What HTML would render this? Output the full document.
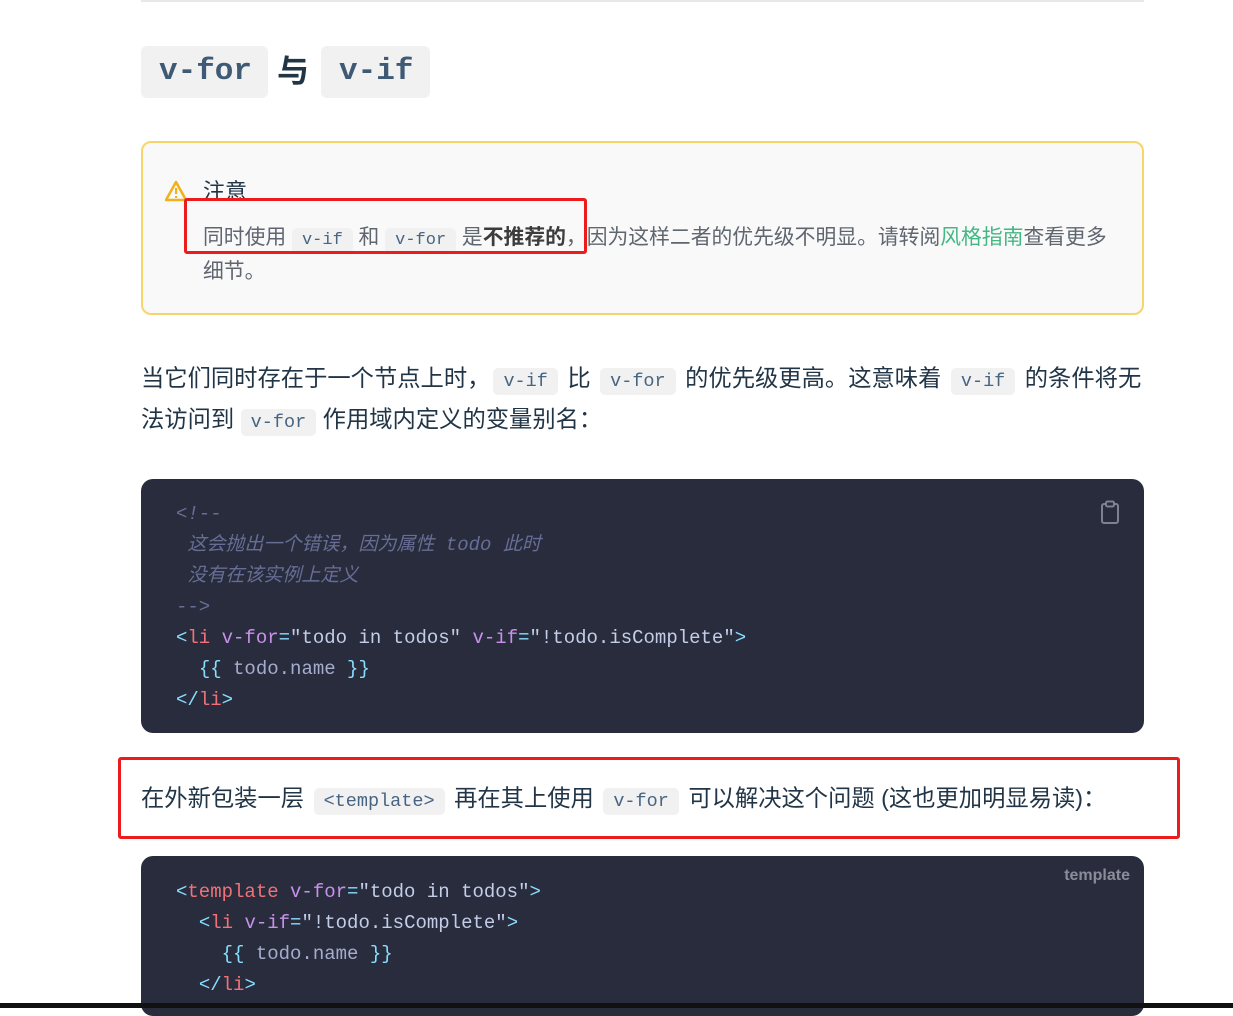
<!DOCTYPE html>
<html><head><meta charset="utf-8"><style>
*{margin:0;padding:0;box-sizing:border-box}
body{width:1233px;height:1008px;background:#fff;position:relative;overflow:hidden;font-family:"Liberation Sans","Noto Sans CJK SC",sans-serif;color:#213547}
.a{position:absolute;white-space:nowrap}
.ic{font-family:"Liberation Mono",monospace;background:#f1f1f1;color:#476582;border-radius:5px;padding:3px 10px;font-size:18.5px}
.m{margin:0 3px}
.cb{position:absolute;left:141px;width:1003px;background:#292c3d;border-radius:12px}
.code{position:absolute;left:35px;font-family:"Liberation Mono","Noto Sans CJK SC",monospace;font-size:19px;line-height:31px;color:#a6accd;white-space:pre}
.p{color:#89ddff}.t{color:#f07178}.at{color:#c792ea}.s{color:#c3cde8}.c{color:#676e95;font-style:italic}
.red{position:absolute;border:3px solid #ec1c1c;border-radius:3px}
</style></head><body>
<div class="a" style="left:141px;top:0;width:1003px;height:2px;background:#e8e8e8"></div>

<div class="a" style="left:141px;top:46px;height:52px;width:127px;background:#f1f1f1;border-radius:6px"></div>
<div class="a" style="left:321px;top:46px;height:52px;width:109px;background:#f1f1f1;border-radius:6px"></div>
<div class="a" style="left:159px;top:54px;font:bold 31px 'Liberation Mono',monospace;color:#3f5a75">v-for</div>
<div class="a" style="left:277px;top:46px;font-size:32px;font-weight:bold;color:#213547">与</div>
<div class="a" style="left:339px;top:54px;font:bold 31px 'Liberation Mono',monospace;color:#3f5a75">v-if</div>

<div class="a" style="left:141px;top:141px;width:1003px;height:174px;background:#f9f9f9;border:2px solid #f7d56b;border-radius:10px"></div>
<svg class="a" style="left:165px;top:180px" width="22" height="22" viewBox="0 0 22 22"><path d="M11 2 L21 20 H1 Z" fill="none" stroke="#f2b11b" stroke-width="2.5" stroke-linejoin="round"/><rect x="10" y="8" width="2.2" height="6" fill="#f2b11b"/><rect x="10" y="16" width="2.2" height="2" fill="#f2b11b"/></svg>
<div class="a" style="left:203px;top:174px;font-size:22px;color:#213547">注意</div>
<div class="a" style="left:203px;top:220px;font-size:20.8px;color:#5f6670">同时使用 <span class="ic" style="font-size:17px">v-if</span> 和 <span class="ic" style="font-size:17px">v-for</span> 是<b style="color:#3c3c3c">不推荐的</b>，因为这样二者的优先级不明显。请转阅<span style="color:#42b883">风格指南</span>查看更多</div>
<div class="a" style="left:203px;top:254px;font-size:20.8px;color:#5f6670">细节。</div>
<div class="red" style="left:184px;top:198px;width:403px;height:56px"></div>

<div class="a" style="left:141px;top:359px;font-size:23.3px">当它们同时存在于一个节点上时，<span class="ic m">v-if</span> 比 <span class="ic m">v-for</span> 的优先级更高。这意味着 <span class="ic m">v-if</span> 的条件将无</div>
<div class="a" style="left:141px;top:400px;font-size:23.3px">法访问到 <span class="ic">v-for</span> 作用域内定义的变量别名：</div>

<div class="cb" style="top:479px;height:254px">
<svg class="a" style="left:959px;top:21px" width="20" height="25" viewBox="0 0 20 25"><rect x="2" y="4" width="16" height="19" rx="2" fill="none" stroke="#7d8196" stroke-width="2"/><rect x="6" y="1.5" width="8" height="5" rx="1.5" fill="#292c3d" stroke="#7d8196" stroke-width="2"/></svg>
<div class="code" style="top:20px"><span class="c">&lt;!--
 这会抛出一个错误，因为属性 todo 此时
 没有在该实例上定义
--&gt;</span>
<span class="p">&lt;</span><span class="t">li</span> <span class="at">v-for</span><span class="p">=</span><span class="s">"todo in todos"</span> <span class="at">v-if</span><span class="p">=</span><span class="s">"!todo.isComplete"</span><span class="p">&gt;</span>
  <span class="p">{{</span> todo.name <span class="p">}}</span>
<span class="p">&lt;/</span><span class="t">li</span><span class="p">&gt;</span></div>
</div>

<div class="a" style="left:141px;top:779px;font-size:23.3px">在外新包装一层 <span class="ic m">&lt;template&gt;</span> 再在其上使用 <span class="ic m">v-for</span> 可以解决这个问题 (这也更加明显易读)：</div>
<div class="red" style="left:118px;top:757px;width:1062px;height:82px"></div>

<div class="cb" style="top:856px;height:160px">
<div class="a" style="right:14px;top:11px;font-size:16px;color:#8a8d99;font-weight:bold">template</div>
<div class="code" style="top:21px"><span class="p">&lt;</span><span class="t">template</span> <span class="at">v-for</span><span class="p">=</span><span class="s">"todo in todos"</span><span class="p">&gt;</span>
  <span class="p">&lt;</span><span class="t">li</span> <span class="at">v-if</span><span class="p">=</span><span class="s">"!todo.isComplete"</span><span class="p">&gt;</span>
    <span class="p">{{</span> todo.name <span class="p">}}</span>
  <span class="p">&lt;/</span><span class="t">li</span><span class="p">&gt;</span></div>
</div>
<div class="a" style="left:0;top:1003px;width:1233px;height:5px;background:#111"></div>
</body></html>
